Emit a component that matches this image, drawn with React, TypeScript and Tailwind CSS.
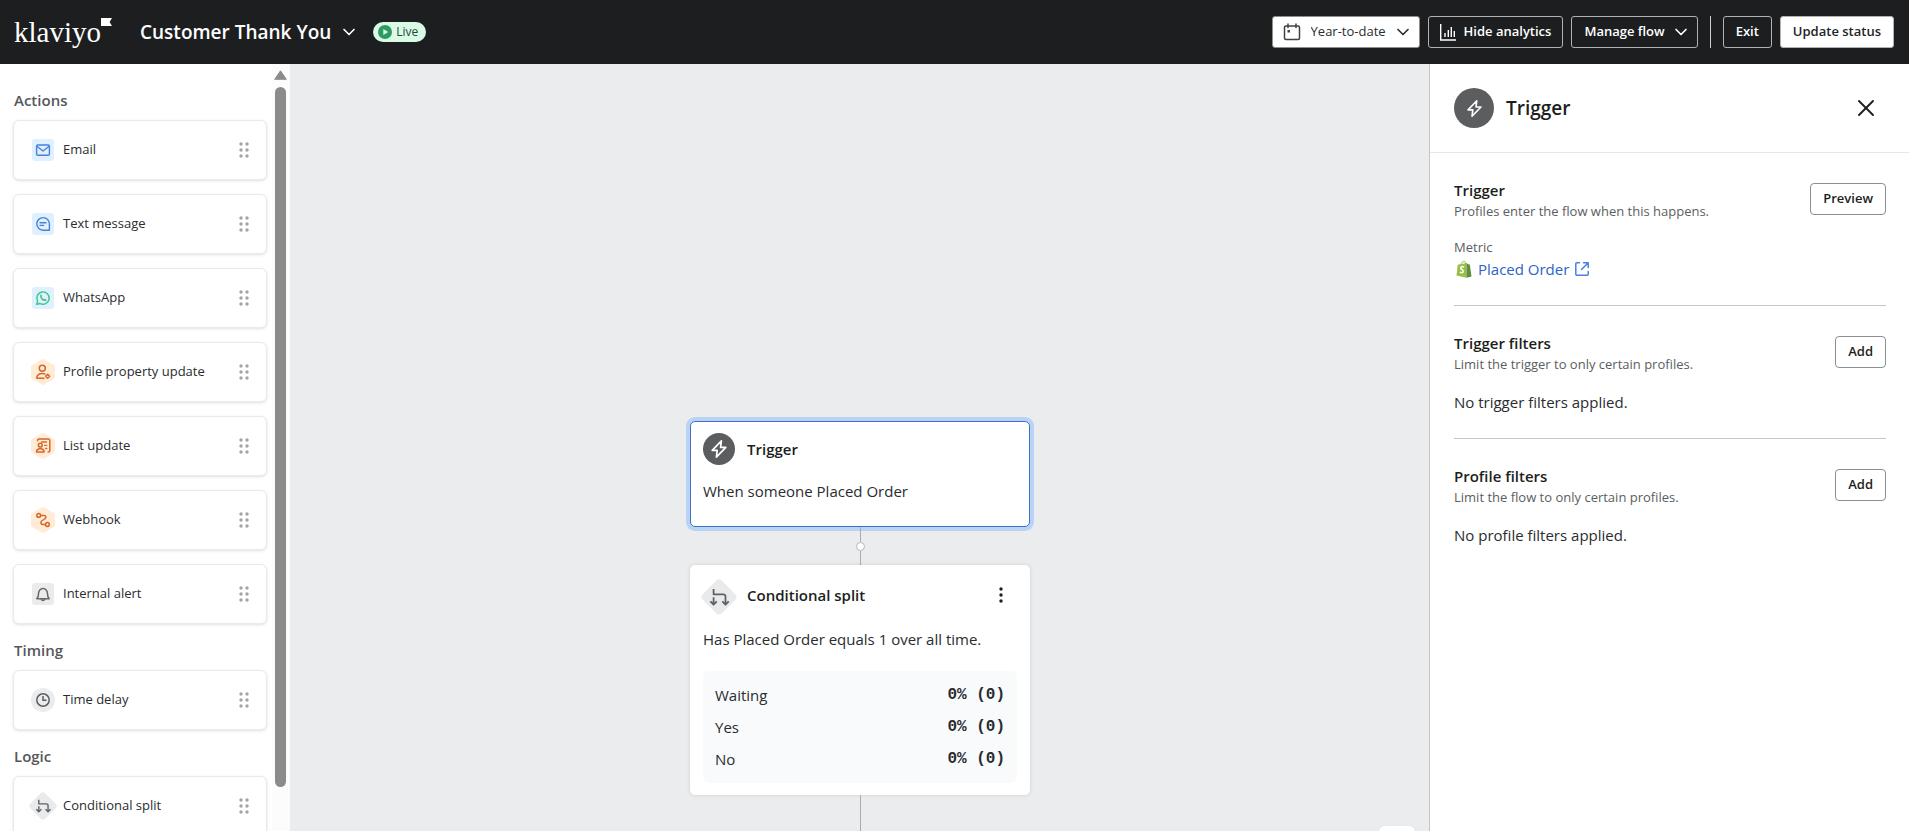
import type { ReactNode } from "react";
import { ChevronDown, X } from "lucide-react";

function EmailIcon() {
  return (
    <svg viewBox="0 0 22 22" className="size-[22px]" fill="none" stroke="#4a80d9" strokeWidth="1.4" strokeLinejoin="round">
      <rect width="22" height="22" rx="3" fill="#dff0ff" stroke="none" />
      <rect x="4.6" y="6" width="12.8" height="10.2" rx="1.2" />
      <path d="M4.8 7.2 11 12l6.2-4.8" />
    </svg>
  );
}

function TextMessageIcon() {
  return (
    <svg viewBox="0 0 22 22" className="size-[22px]" fill="none" stroke="#4a80d9" strokeWidth="1.4" strokeLinecap="round" strokeLinejoin="round">
      <rect width="22" height="22" rx="3" fill="#dff0ff" stroke="none" />
      <path d="M17.4 11v6.2H11A6.3 6.3 0 1 1 17.4 11Z" />
      <path d="M8 9.8h6M8 12.4h3.6" />
    </svg>
  );
}

function WhatsAppIcon() {
  return (
    <svg viewBox="0 0 22 22" className="size-[22px]" fill="none" stroke="#3fc486" strokeWidth="1.4" strokeLinecap="round" strokeLinejoin="round">
      <rect width="22" height="22" rx="3" fill="#dff0ff" stroke="none" />
      <path d="m4.7 17.4.9-3.3a6.2 6.2 0 1 1 2.4 2.4Z" />
      <path d="M8.3 7.9c.5-.7 1.1-.5 1.3 0l.5 1.1c.1.4-.4.7-.5 1 .5 1 1.3 1.8 2.4 2.3.4-.1.7-.7 1.1-.5l1.1.6c.5.3.4 1-.2 1.4-2.5 1.5-6.9-2.9-5.7-5.9Z" fill="#3fc486" stroke="none" />
    </svg>
  );
}

function Hexagon({ children }: { children: ReactNode }) {
  return (
    <svg viewBox="0 0 26 28" className="h-7 w-[26px]" fill="none" stroke="#d2682c" strokeWidth="1.5" strokeLinecap="round" strokeLinejoin="round">
      <path d="M13 2.5 23.5 8.5v11L13 25.5 2.5 19.5v-11Z" fill="#ffebd6" stroke="#ffebd6" strokeWidth="3" />
      {children}
    </svg>
  );
}

function ProfileIcon() {
  return (
    <Hexagon>
      <circle cx="12.3" cy="10.2" r="3" />
      <path d="M14 20.3H6.8c-.3-3 2-4.7 5.5-4.7 1 0 1.8.1 2.5.4" />
      <path d="m17.6 16.2 2 2-2 2-2-2Z" />
    </Hexagon>
  );
}

function ListIcon() {
  return (
    <Hexagon>
      <path d="M7.5 8.8c0-1 .6-1.7 1.6-1.7h9c1 0 1.7.7 1.7 1.7v9.6c0 1-.7 1.7-1.7 1.7" />
      <circle cx="10.3" cy="13.2" r="1.9" />
      <path d="M6.5 20.1c0-2 1.2-3.4 3.8-3.4s3.8 1.4 3.8 3.4Z" />
      <path d="M11.5 10h5M14.6 13.3h2.2M15.6 16.5h1.2" strokeWidth="1.3" />
    </Hexagon>
  );
}

function WebhookIcon() {
  return (
    <Hexagon>
      <circle cx="8.7" cy="9.4" r="1.9" />
      <circle cx="17.4" cy="18.5" r="1.9" />
      <path d="M10.6 9.4h3.4c1.2 0 1.9 1 1.9 1.9 0 3-5 2.2-5 5 0 1.3.9 2.2 2.1 2.2h2.5" />
    </Hexagon>
  );
}

function BellIcon() {
  return (
    <svg viewBox="0 0 22 22" className="size-[22px]" fill="none" stroke="#66696c" strokeWidth="1.5" strokeLinecap="round" strokeLinejoin="round">
      <rect width="22" height="22" rx="3" fill="#ebebec" stroke="none" />
      <path d="M4.8 15.8c1.5-1.2 1.7-2.5 1.7-5a4.5 5.4 0 0 1 9 0c0 2.5.2 3.8 1.7 5Z" />
      <path d="M9.3 16.2a1.8 1.8 0 0 0 3.4 0" />
    </svg>
  );
}

function ClockIcon() {
  return (
    <svg viewBox="0 0 24 24" className="size-6" fill="none" stroke="#5b5e61" strokeWidth="1.5">
      <circle cx="12" cy="12" r="12" fill="#ebecee" stroke="none" />
      <circle cx="12" cy="12" r="6.2" />
      <path d="M12 8v4.3h3.5" />
    </svg>
  );
}

function SplitIcon({ className }: { className: string }) {
  return (
    <svg viewBox="0 0 36 36" className={className} fill="none" stroke="#5f6265" strokeWidth="1.8" strokeLinejoin="round">
      <rect x="4.5" y="4.5" width="27" height="27" rx="4" fill="#e9eaec" stroke="none" transform="rotate(45 18 18)" />
      <path d="M12.6 10v5.3h9.9a2 2 0 0 1 2 2v8M12.6 18.3v7" />
      <path d="m9.4 22.3 3.2 3.2 3.2-3.2M21.3 22.3l3.2 3.2 3.2-3.2" />
    </svg>
  );
}

function BoltIcon({ className }: { className: string }) {
  return (
    <svg viewBox="0 0 20 20" className={className} fill="none" stroke="#fff" strokeWidth="1.7" strokeLinejoin="round">
      <path d="M12.4 1.8 3.2 11.4h5l-.8 6.8 9.4-9.8h-5.2Z" />
    </svg>
  );
}

function Grip() {
  return (
    <svg viewBox="0 0 10 16" className="h-4 w-2.5" fill="#a3a5a7">
      {[2, 8, 14].map((y) => (
        <g key={y}>
          <circle cx="2" cy={y} r="1.7" />
          <circle cx="8" cy={y} r="1.7" />
        </g>
      ))}
    </svg>
  );
}

function ShopifyIcon() {
  return (
    <svg viewBox="0 0 16 18" className="h-[18px] w-4">
      <path d="M5 5c.4-2.3 1.8-4 3.2-3.8 1 .1 1.5 1.4 1.5 3" fill="none" stroke="#95bf47" strokeWidth="1" />
      <path d="M1.8 4.8 10.5 3v14.8L.5 15.6Z" fill="#95bf47" />
      <path d="m10.5 3 1.6 1.3 1.7.3 1.7 11.8-5 1.4Z" fill="#5e8e3e" />
      <path d="M8 7c-1.5-.8-3.3-.3-3.3 1.1 0 1.7 2.5 1.5 2.5 3.3 0 1.5-1.9 1.7-3.3.7" fill="none" stroke="#fff" strokeWidth="1.5" />
    </svg>
  );
}

const sections = [
  {
    title: "Actions",
    items: [
      { label: "Email", icon: <EmailIcon /> },
      { label: "Text message", icon: <TextMessageIcon /> },
      { label: "WhatsApp", icon: <WhatsAppIcon /> },
      { label: "Profile property update", icon: <ProfileIcon /> },
      { label: "List update", icon: <ListIcon /> },
      { label: "Webhook", icon: <WebhookIcon /> },
      { label: "Internal alert", icon: <BellIcon /> },
    ],
  },
  { title: "Timing", items: [{ label: "Time delay", icon: <ClockIcon /> }] },
  { title: "Logic", items: [{ label: "Conditional split", icon: <SplitIcon className="size-7" /> }] },
];

const stats = [
  { label: "Waiting", value: "0% (0)" },
  { label: "Yes", value: "0% (0)" },
  { label: "No", value: "0% (0)" },
];

const filters = [
  { title: "Trigger filters", text: "Limit the trigger to only certain profiles.", empty: "No trigger filters applied." },
  { title: "Profile filters", text: "Limit the flow to only certain profiles.", empty: "No profile filters applied." },
];

function Header() {
  return (
    <header className="flex h-16 shrink-0 items-center justify-between bg-[#1d1e20] pr-[15px] pl-3.5 text-[13px] text-white">
      <div className="flex items-center">
        <a href="#" aria-label="Klaviyo" className="flex items-start">
          <span className="font-['Liberation_Serif',serif] text-[29px] leading-8">klaviyo</span>
          <svg viewBox="0 0 11 10" className="h-2.5 w-[11px]" fill="#fff">
            <path d="M0 2h11L8.6 6 11 10H0Z" />
          </svg>
        </a>
        <button className="ml-7 flex items-center gap-2 text-[19px] font-semibold">
          Customer Thank You
          <ChevronDown className="size-5" />
        </button>
        <span className="ml-3.5 flex h-5 items-center gap-1 rounded-full bg-[#d9fbe5] pr-2 pl-[5px] text-xs text-[#1f4a35]">
          <svg viewBox="0 0 14 14" className="size-3.5">
            <circle cx="7" cy="7" r="7" fill="#2e9a63" />
            <path d="M5.3 3.9v6.2L10.2 7Z" fill="#d9fbe5" />
          </svg>
          Live
        </span>
      </div>

      <div className="flex items-center gap-2">
        <label className="flex h-8 items-center rounded-[3px] border border-[#8c8e90] bg-white pr-1.5 pl-2.5 text-[#2b2d2f]">
          <svg viewBox="0 0 18 18" className="mr-2.5 size-[18px]" fill="none" stroke="#3f4144" strokeWidth="1.5" strokeLinecap="round">
            <rect x="1.5" y="3" width="15" height="13.5" rx="1.5" />
            <path d="M5 1v3.5M13 1v3.5" />
            <rect x="5" y="7.5" width="1.5" height="1.5" fill="#3f4144" strokeWidth="1" />
          </svg>
          <select aria-label="Date range" className="w-[82px] appearance-none bg-transparent outline-none">
            <option>Year-to-date</option>
          </select>
          <ChevronDown className="size-5" />
        </label>
        <button className="flex h-8 items-center gap-2 rounded-[3px] border border-[#b0b2b4] px-[11px] font-semibold">
          <svg viewBox="0 0 16 18" className="h-[18px] w-4" fill="none" stroke="#fff" strokeWidth="1.4">
            <path d="M.7 1v16H16M5 10v4M8.3 7v7M11.3 4v10M14.3 8v6" />
          </svg>
          Hide analytics
        </button>
        <button className="flex h-8 items-center gap-1.5 rounded-[3px] border border-[#b0b2b4] pr-1.5 pl-3 font-semibold">
          Manage flow
          <ChevronDown className="size-5" />
        </button>
        <span className="mx-1 h-8 w-px bg-[#d0d1d3]" />
        <button className="h-8 rounded-[3px] border border-[#b0b2b4] px-3 font-semibold">Exit</button>
        <button className="h-8 rounded-[3px] border border-[#b0b2b4] bg-white px-3 font-semibold text-[#232426]">Update status</button>
      </div>
    </header>
  );
}

function Sidebar() {
  return (
    <aside className="flex w-[290px] shrink-0 overflow-hidden bg-white">
      <div className="grow pt-2.5 pr-[5px] pl-[13px]">
        {sections.map((section) => (
          <section key={section.title} className="pt-3.5">
            <h2 className="pb-2 pl-px text-[15px] leading-6 font-semibold text-[#55575a]">{section.title}</h2>
            <ul className="flex flex-col gap-3.5">
              {section.items.map((item) => (
                <li key={item.label} draggable className="flex h-[60px] items-center rounded-md border border-[#e9eaeb] bg-white pr-[17px] pl-[15px] shadow-[0_1px_3px_rgba(0,0,0,0.12)]">
                  <span className="flex w-7 justify-center">{item.icon}</span>
                  <span className="ml-1.5 grow text-[13px] text-[#2a2c2f]">{item.label}</span>
                  <Grip />
                </li>
              ))}
            </ul>
          </section>
        ))}
      </div>
      {/* scrollbar */}
      <div className="flex w-[18px] shrink-0 flex-col items-center bg-[#fcfcfc] pt-1.5 pr-0.5 pb-11">
        <svg viewBox="0 0 13 10" className="mb-[7px] h-2.5 w-[13px]" fill="#8b8b8b" stroke="#8b8b8b" strokeLinejoin="round">
          <path d="M6.5.8 12.3 9.3H.7Z" />
        </svg>
        <div className="w-[11px] grow rounded-full bg-[#8b8b8b]" />
      </div>
    </aside>
  );
}

function Canvas() {
  return (
    <main className="relative flex grow flex-col items-center overflow-hidden bg-[#ebecee] pt-[357px] pl-px text-[15px] text-[#2a2c2f]">
      <div className="h-[106px] w-[340px] shrink-0 rounded-[5px] border border-[#3f6fc9] bg-white px-3 py-[11px] ring-4 ring-[#b9d3f5]">
        <div className="flex items-center gap-3">
          <span className="flex size-8 items-center justify-center rounded-full bg-[#5c5d5e]">
            <BoltIcon className="size-5" />
          </span>
          <h3 className="font-semibold text-[#1d1e20]">Trigger</h3>
        </div>
        <p className="mt-3.5 leading-6">When someone Placed Order</p>
      </div>

      <div className="flex h-[38px] shrink-0 flex-col items-center">
        <span className="w-px grow bg-[#a9abad]" />
        <span className="size-[9px] rounded-full border border-[#b5b7b9] bg-white" />
        <span className="w-px grow bg-[#a9abad]" />
      </div>

      <div className="w-[340px] shrink-0 rounded-[5px] bg-white px-[13px] pt-3.5 pb-3 shadow-[0_0_4px_rgba(0,0,0,0.12)]">
        <div className="flex h-9 items-start">
          <SplitIcon className="-ml-0.5 size-9" />
          <h3 className="ml-2.5 grow leading-8 font-semibold text-[#1d1e20]">Conditional split</h3>
          <button aria-label="More options" className="flex h-8 items-center px-3.5">
            <svg viewBox="0 0 4 16" className="h-4 w-1" fill="#1d1e20">
              <circle cx="2" cy="2" r="1.7" />
              <circle cx="2" cy="8" r="1.7" />
              <circle cx="2" cy="14" r="1.7" />
            </svg>
          </button>
        </div>
        <p className="mt-3 leading-6">Has Placed Order equals 1 over all time.</p>
        <div className="mt-5 rounded-md bg-[#f9fafc] px-3 py-2">
          <table className="w-full">
            <tbody>
              {stats.map((row) => (
                <tr key={row.label} className="h-8">
                  <th scope="row" className="text-left font-normal">{row.label}</th>
                  <td className="text-right font-['Liberation_Mono',monospace] text-base leading-6 font-bold">{row.value}</td>
                </tr>
              ))}
            </tbody>
          </table>
        </div>
      </div>
      <span className="w-px grow bg-[#a9abad]" />

      <button aria-label="Zoom in" className="absolute right-3.5 -bottom-[31px] size-9 rounded-md bg-white shadow-sm" />
    </main>
  );
}

function PanelButton({ children }: { children: ReactNode }) {
  return <button className="mt-1 h-8 rounded-[4px] border border-[#8c8e90] bg-white px-3 text-[13px] font-semibold text-[#1d1e20]">{children}</button>;
}

function SectionHead({ title, text, action }: { title: string; text: string; action: string }) {
  return (
    <div className="flex items-start justify-between">
      <div>
        <h3 className="text-[15px] leading-[22px] font-semibold text-[#1d1e20]">{title}</h3>
        <p className="text-[13px] leading-5 text-[#5b5e61]">{text}</p>
      </div>
      <PanelButton>{action}</PanelButton>
    </div>
  );
}

function DetailsPanel() {
  return (
    <aside className="w-[480px] shrink-0 border-l border-[#c3c5c7] bg-white text-[15px] text-[#2a2c2f]">
      <div className="flex h-[89px] items-center border-b border-[#e6e7e8] pr-[23px] pl-6">
        <span className="flex size-10 items-center justify-center rounded-full bg-[#5c5d5e]">
          <BoltIcon className="size-[19px]" />
        </span>
        <h2 className="ml-3 grow text-[19px] font-semibold text-[#1d1e20]">Trigger</h2>
        <button aria-label="Close" className="p-1.5 text-[#1d1e20]">
          <X className="size-7" strokeWidth={1.6} />
        </button>
      </div>

      <div className="divide-y divide-[#c3c5c7] pr-[23px] pl-6">
        <section className="pt-[26px] pb-6">
          <SectionHead title="Trigger" text="Profiles enter the flow when this happens." action="Preview" />
          <p className="mt-4 text-[13px] leading-5 text-[#5b5e61]">Metric</p>
          <a href="#" className="flex items-center leading-6 text-[#2b64c6]">
            <span className="mr-1.5 ml-0.5"><ShopifyIcon /></span>
            Placed Order
            <svg viewBox="0 0 14 14" className="ml-1.5 size-3.5" fill="none" stroke="#4a80e0" strokeWidth="1.5" strokeLinecap="round" strokeLinejoin="round">
              <path d="M4.5.8H1.8a1 1 0 0 0-1 1v10.4a1 1 0 0 0 1 1h10.4a1 1 0 0 0 1-1V9.5M8.5.8h4.7v4.7M13 1 6.5 7.5" />
            </svg>
          </a>
        </section>
        {filters.map((filter) => (
          <section key={filter.title} className="pt-[26px] pb-6">
            <SectionHead title={filter.title} text={filter.text} action="Add" />
            <p className="mt-4 leading-6">{filter.empty}</p>
          </section>
        ))}
      </div>
    </aside>
  );
}

export default function App() {
  return (
    <div className="flex h-screen flex-col overflow-hidden font-['Open_Sans',sans-serif]">
      <Header />
      <div className="flex min-h-0 grow">
        <Sidebar />
        <Canvas />
        <DetailsPanel />
      </div>
    </div>
  );
}
